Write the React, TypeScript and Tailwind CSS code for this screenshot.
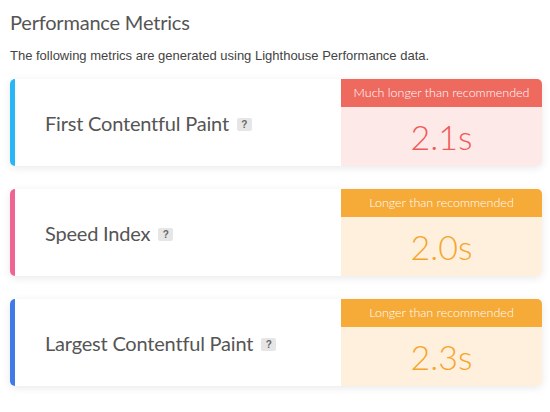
const metrics = [
  {
    name: "First Contentful Paint",
    value: "2.1s",
    verdict: "Much longer than recommended",
    accent: "bg-[#29b6f6]",
    head: "bg-[#ee6a5f]",
    body: "bg-[#fee9e9]",
    text: "text-[#ee5b57]",
  },
  {
    name: "Speed Index",
    value: "2.0s",
    verdict: "Longer than recommended",
    accent: "bg-[#f06493]",
    head: "bg-[#f6aa37]",
    body: "bg-[#fef0dc]",
    text: "text-[#f6a52c]",
  },
  {
    name: "Largest Contentful Paint",
    value: "2.3s",
    verdict: "Longer than recommended",
    accent: "bg-[#3f7ae8]",
    head: "bg-[#f6aa37]",
    body: "bg-[#fef0dc]",
    text: "text-[#f6a52c]",
  },
];

function MetricCard({ m }: { m: (typeof metrics)[number] }) {
  return (
    <div className="flex h-[87px] rounded-[5px] bg-white shadow-[0_2px_8px_rgba(0,0,0,0.09)]">
      <div className={`w-[5px] shrink-0 rounded-l-[5px] ${m.accent}`} />
      <div className="flex flex-1 items-center pl-[30px]">
        <span className="text-[20px] tracking-[-0.2px] text-[#555]">{m.name}</span>
        <span className="ml-[8px] mt-[3px] flex h-[13px] w-[15px] shrink-0 items-center justify-center rounded-[2px] bg-[#e6e6e6] font-['Liberation_Sans',sans-serif] text-[10px] font-bold text-[#666]">
          ?
        </span>
      </div>
      <div className={`flex w-[201px] flex-col overflow-hidden rounded-r-[5px] ${m.body}`}>
        <div className={`flex h-[28px] items-center justify-center text-[12.5px] font-light text-white ${m.head}`}>
          {m.verdict}
        </div>
        <div className={`flex flex-1 items-center justify-center pb-[1px] text-[34px] font-light ${m.text}`}>
          {m.value}
        </div>
      </div>
    </div>
  );
}

export default function App() {
  return (
    <div className="h-[412px] w-[550px] bg-white px-[10px] pt-[7px] font-['Lato',sans-serif]">
      <h1 className="text-[20px] font-normal leading-[30px] tracking-[-0.2px] text-[#555]">Performance Metrics</h1>
      <p className="mt-[10px] font-['Liberation_Sans',sans-serif] text-[13px] leading-[18px] text-[#444]">
        The following metrics are generated using Lighthouse Performance data.
      </p>
      <div className="mt-[14px] mr-[-2px] flex flex-col gap-[23px]">
        {metrics.map((m) => (
          <MetricCard key={m.name} m={m} />
        ))}
      </div>
    </div>
  );
}
